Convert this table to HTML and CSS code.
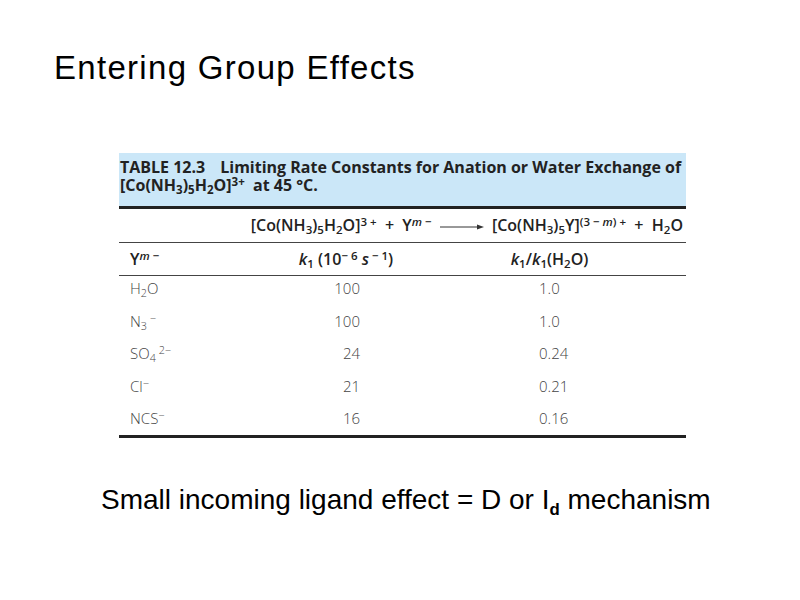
FILE: index.html
```html
<!DOCTYPE html>
<html>
<head>
<meta charset="utf-8">
<link rel="stylesheet" href="styles.css">
</head>
<body>
<div class="slide">
  <h1 class="title">Entering Group Effects</h1>
  <div class="tbl">
    <div class="caption">
      <div><span class="tno">TABLE 12.3</span>Limiting Rate Constants for Anation or Water Exchange of</div>
      <div>[Co(NH<sub>3</sub>)<sub>5</sub>H<sub>2</sub>O]<sup>3+</sup> &nbsp;at 45 °C.</div>
    </div>
    <div class="eq">[Co(NH<sub>3</sub>)<sub>5</sub>H<sub>2</sub>O]<sup>3 +</sup> &nbsp;+ &nbsp;Y<sup><i>m</i> −</sup> <svg class="arrow" width="46" height="8" viewBox="0 0 46 8"><line x1="1" y1="4" x2="42" y2="4" stroke="#333" stroke-width="1"/><path d="M38 1.5 L45 4 L38 6.5 Z" fill="#333"/></svg> [Co(NH<sub>3</sub>)<sub>5</sub>Y]<sup>(3 − <i>m</i>) +</sup> &nbsp;+ &nbsp;H<sub>2</sub>O</div>
    <div class="row head">
      <div class="c1">Y<sup><i>m</i> −</sup></div>
      <div class="c2 ctr"><i>k</i><sub>1</sub> (10<sup>− 6</sup> <i>s</i><sup> − 1</sup>)</div>
      <div class="c3 ctr"><i>k</i><sub>1</sub>/<i>k</i><sub>1</sub>(H<sub>2</sub>O)</div>
    </div>
    <div class="body">
      <div class="row"><div class="c1">H<sub>2</sub>O</div><div class="c2">100</div><div class="c3">1.0</div></div>
      <div class="row"><div class="c1">N<sub>3</sub><sup> −</sup></div><div class="c2">100</div><div class="c3">1.0</div></div>
      <div class="row"><div class="c1">SO<sub>4</sub><sup> 2−</sup></div><div class="c2">24</div><div class="c3">0.24</div></div>
      <div class="row"><div class="c1">Cl<sup>−</sup></div><div class="c2">21</div><div class="c3">0.21</div></div>
      <div class="row"><div class="c1">NCS<sup>−</sup></div><div class="c2">16</div><div class="c3">0.16</div></div>
    </div>
  </div>
  <p class="note">Small incoming ligand effect = D or I<sub>d</sub> mechanism</p>
</div>
</body>
</html>
```
FILE: styles.css
```css
html, body { margin: 0; padding: 0; background: #fff; }
.slide { width: 800px; height: 600px; position: relative; overflow: hidden; }
.title {
  margin: 0; padding: 46px 0 0 54px;
  font-family: "Liberation Sans", Arial, sans-serif;
  font-weight: normal; font-size: 33px; line-height: 44px; color: #000;
  letter-spacing: 1.3px;
}
.tbl {
  margin: 63px 0 0 119px; width: 567px;
  font-family: "Open Sans", "Noto Sans", sans-serif; color: #222;
}
.caption {
  background: #cbe7f8; height: 56px; box-sizing: border-box;
  padding: 5px 0 0 1px; font-weight: 700; font-size: 16px; line-height: 18px;
  border-bottom: 3px solid #222;
}
.tno { margin-right: 15px; }
sub, sup { font-size: 72%; line-height: 0; position: relative; vertical-align: baseline; }
sub { top: 0.3em; }
sup { top: -0.45em; }
.eq {
  height: 34px; box-sizing: border-box; text-align: right; padding-right: 3px;
  font-weight: 600; font-size: 16px; line-height: 32px;
  border-bottom: 1px solid #444;
}
.arrow { vertical-align: middle; margin: 0 3px; }
.row { display: grid; grid-template-columns: 160px 134px 273px; }
.head {
  height: 33px; box-sizing: border-box; font-weight: 600; font-size: 16px; line-height: 32px;
  border-bottom: 1px solid #444;
}
.head .c1 { padding-left: 11px; }
.ctr { text-align: center; }
.body {
  padding: 0 0 5px 0; display: flex; flex-direction: column; gap: 8.5px;
  border-bottom: 3px solid #222;
  font-weight: 300; font-size: 15px; line-height: 24px; color: #444;
}
.body .c1 { padding-left: 11px; }
.body .c2 { text-align: right; padding-right: 53px; }
.body .c3 { padding-left: 126px; }
.note {
  margin: 45px 0 0 101px;
  font-family: "Liberation Sans", Arial, sans-serif;
  font-size: 28px; line-height: 34px; color: #000;
}
.note sub { font-size: 60%; font-weight: bold; top: 0.35em; }
```
